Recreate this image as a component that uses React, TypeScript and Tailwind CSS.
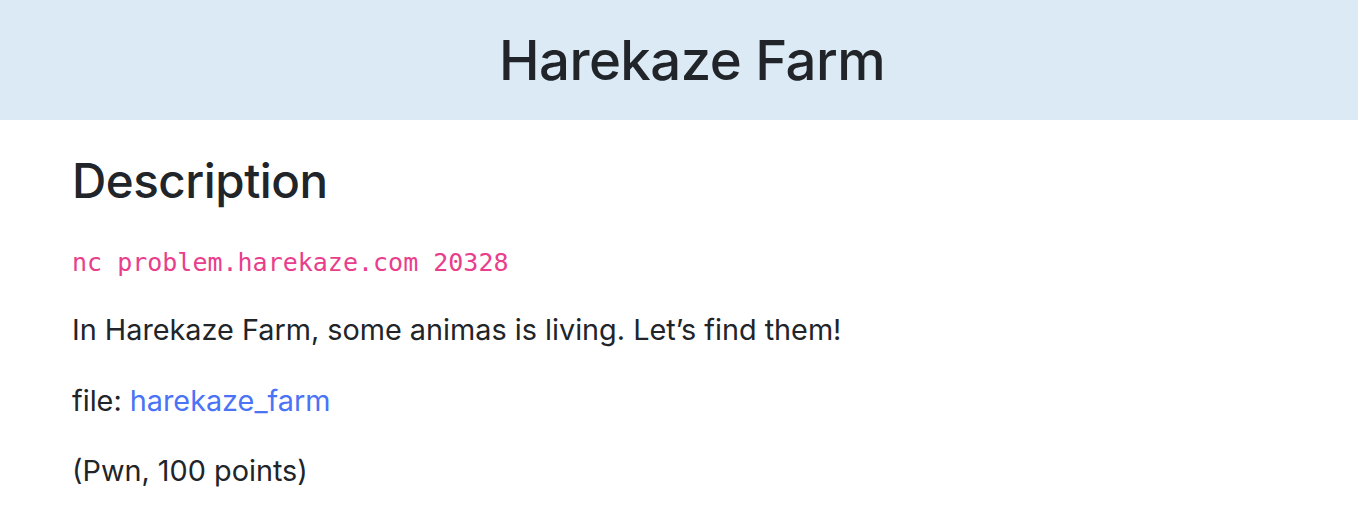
export default function App() {
  return (
    <div className="min-h-screen bg-white text-[#212529]" style={{ fontFamily: "Inter, 'Noto Sans', sans-serif" }}>
      <header className="h-[120px] bg-[#dbeaf5] flex items-center justify-center pl-[26px]">
        <h1 className="text-[54.5px] font-medium leading-none tracking-[-0.01em]">Harekaze Farm</h1>
      </header>
      <main className="px-[72px] pt-[32px]">
        <h2 className="text-[47.5px] font-medium leading-[1.2] mb-[33px] tracking-[-0.01em]">Description</h2>
        <p className="mb-[23px] leading-[42px]">
          <code className="text-[25px] text-[#e83e8c]" style={{ fontFamily: "'DejaVu Sans Mono', monospace" }}>
            nc problem.harekaze.com 20328
          </code>
        </p>
        <p className="text-[28.8px] leading-[42px] mb-[29px]">In Harekaze Farm, some animas is living. Let’s find them!</p>
        <p className="text-[28.8px] leading-[42px] mb-[28px]">
          file: <a href="#" className="text-[#4a73f6]">harekaze_farm</a>
        </p>
        <p className="text-[28.8px] leading-[42px]">(Pwn, 100 points)</p>
      </main>
    </div>
  );
}
